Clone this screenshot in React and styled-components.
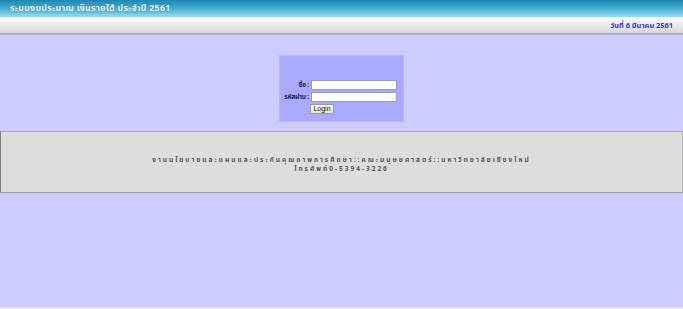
import React from 'react'
import styled, { createGlobalStyle } from 'styled-components'

const GlobalStyle = createGlobalStyle`
  html, body {
    margin: 0;
    padding: 0;
    background: #e4e4e4;
    font-family: Tahoma, "Noto Sans Thai", "DejaVu Sans", sans-serif;
  }
`

const Page = styled.div`
  height: 307px;
  background: #ccccff;
  display: flex;
  flex-direction: column;
`

const TitleBar = styled.div`
  height: 17px;
  background: linear-gradient(#1b87b3, #53b6d8 60%, #9bdcef);
  border-bottom: 1px solid #e8f6fb;
  display: flex;
  align-items: center;
  padding-left: 10px;
`

const Title = styled.h1`
  margin: 0;
  font-size: 8.8px;
  font-weight: bold;
  color: #e8f4fa;
  text-shadow: 0 0 2px #3a7f9c;
  letter-spacing: 0.3px;
`

const DateBar = styled.div`
  height: 15px;
  background: linear-gradient(#fbfbfb, #d6d6d6);
  border-bottom: 2px solid #aeaed8;
  display: flex;
  align-items: center;
  justify-content: flex-end;
  padding-right: 10px;
`

const DateText = styled.span`
  font-size: 7.4px;
  font-weight: bold;
  color: #3b36c8;
`

const LoginArea = styled.div`
  display: flex;
  justify-content: center;
  padding-top: 20px;
  padding-bottom: 9px;
`

const LoginBox = styled.form`
  width: 125px;
  height: 67px;
  background: #aaaaff;
  border: 1px solid #b6b6ff;
  display: grid;
  grid-template-columns: 28px 86px;
  column-gap: 2px;
  row-gap: 2px;
  align-content: start;
  padding: 24px 7px 0 1px;
  box-sizing: border-box;
`

const Label = styled.label`
  font-size: 6.5px;
  font-weight: bold;
  color: #1d1d4f;
  text-align: right;
  align-self: center;
  white-space: nowrap;
  letter-spacing: -0.2px;
`

const Field = styled.input`
  height: 10px;
  width: 86px;
  box-sizing: border-box;
  border: 1px solid #9a9ab8;
  background: #fff;
  padding: 0;
`

const Button = styled.button`
  grid-column: 2;
  justify-self: start;
  margin-left: -1px;
  height: 10px;
  width: 24px;
  padding: 0;
  font-size: 7px;
  font-family: "Liberation Sans", Arial, sans-serif;
  color: #111;
  background: linear-gradient(#fdfdfd, #e2e2e2);
  border: 1px solid #9a9a9a;
  border-radius: 1px;
  line-height: 8px;
`

const Footer = styled.footer`
  height: 62px;
  background: #dddddd;
  border-top: 1px solid #a8a8b8;
  border-bottom: 1px solid #9898b0;
  border-left: 1px solid #7c7c7c;
  border-right: 1px solid #b4b4b4;
  display: flex;
  flex-direction: column;
  align-items: center;
  justify-content: center;
  box-sizing: border-box;
  padding-top: 6px;
`

const FooterLine = styled.div`
  font-size: 6.5px;
  font-weight: bold;
  color: #555;
  letter-spacing: 2px;
  line-height: 9px;
`

const App = () => {
  return (
    <Page>
      <GlobalStyle />
      <TitleBar>
        <Title>ระบบงบประมาณ เงินรายได้ ประจำปี 2561</Title>
      </TitleBar>
      <DateBar>
        <DateText>วันที่ 6 มีนาคม 2561</DateText>
      </DateBar>
      <LoginArea>
        <LoginBox onSubmit={(e) => e.preventDefault()}>
          <Label htmlFor="user">ชื่อ :</Label>
          <Field id="user" type="text" />
          <Label htmlFor="pass">รหัสผ่าน :</Label>
          <Field id="pass" type="password" />
          <Button type="submit">Login</Button>
        </LoginBox>
      </LoginArea>
      <Footer>
        <FooterLine>งานนโยบายและแผนและประกันคุณภาพการศึกษา::คณะมนุษยศาสตร์::มหาวิทยาลัยเชียงใหม่</FooterLine>
        <FooterLine>โทรศัพท์0-5394-3226</FooterLine>
      </Footer>
    </Page>
  )
}

export default App
